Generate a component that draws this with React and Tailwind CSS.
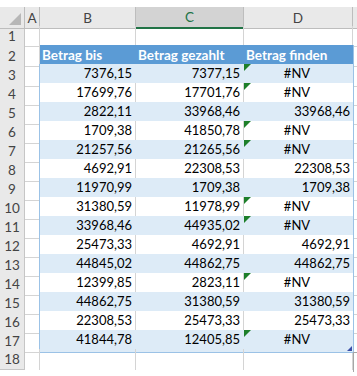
import React from "react";

const rows = [
  ["7376,15", "7377,15", null],
  ["17699,76", "17701,76", null],
  ["2822,11", "33968,46", "33968,46"],
  ["1709,38", "41850,78", null],
  ["21257,56", "21265,56", null],
  ["4692,91", "22308,53", "22308,53"],
  ["11970,99", "1709,38", "1709,38"],
  ["31380,59", "11978,99", null],
  ["33968,46", "44935,02", null],
  ["25473,33", "4692,91", "4692,91"],
  ["44845,02", "44862,75", "44862,75"],
  ["12399,85", "2823,11", null],
  ["44862,75", "31380,59", "31380,59"],
  ["22308,53", "25473,33", "25473,33"],
  ["41844,78", "12405,85", null],
];

const cols = "grid grid-cols-[25px_15px_96px_108px_109px_1fr]";

function RowHead({ n }) {
  return (
    <div className="flex items-center justify-center bg-[#e9e9e9] border-r border-b border-[#c6c6c6] text-[#444] text-[13.5px]">
      {n}
    </div>
  );
}

function ErrorMark() {
  return (
    <svg className="absolute left-0 top-0" width="7" height="7" viewBox="0 0 7 7">
      <path d="M0 0H7L0 7Z" fill="#1d7f2a" />
    </svg>
  );
}

export default function App() {
  return (
    <div
      className="relative w-[357px] h-[376px] bg-white overflow-hidden"
      style={{ fontFamily: "Lato, 'Liberation Sans', sans-serif" }}
    >
      <div className="h-[7px]" />
      {/* column headers */}
      <div className={`${cols} h-[19px] text-[13.5px] text-[#444]`}>
        <div className="relative bg-[#e9e9e9] border-r border-b border-[#bdbdbd]">
          <svg className="absolute right-[3px] bottom-[3px]" width="12" height="12" viewBox="0 0 12 12">
            <path d="M12 0V12H0Z" fill="#b7b7b7" />
          </svg>
        </div>
        <div className="flex items-center justify-center bg-[#e9e9e9] border-r border-b border-[#bdbdbd]">A</div>
        <div className="flex items-center justify-center bg-[#e9e9e9] border-r border-b border-[#bdbdbd]">B</div>
        <div className="flex items-center justify-center bg-[#d3d3d3] border-r border-[#bdbdbd] border-b-2 border-b-[#217346] text-[#217346]">C</div>
        <div className="flex items-center justify-center bg-[#e9e9e9] border-r border-b border-[#bdbdbd]">D</div>
        <div className="bg-[#e9e9e9] border-b border-[#bdbdbd]" />
      </div>

      {/* row 1 */}
      <div className={`${cols} h-[19px]`}>
        <RowHead n={1} />
        <div className="border-r border-b border-[#d4d4d4]" />
        <div className="border-r border-b border-[#d4d4d4]" />
        <div className="border-r border-b border-[#d4d4d4]" />
        <div className="border-r border-b border-[#d4d4d4]" />
        <div className="border-b border-[#d4d4d4]" />
      </div>

      {/* row 2 – table header */}
      <div className={`${cols} h-[19px] text-[13.5px]`}>
        <RowHead n={2} />
        <div className="border-r border-b border-[#d4d4d4]" />
        <div className="flex items-end pb-[1px] pl-[2px] bg-[#5b9bd5] text-white font-bold border-b border-[#9bc2e6]">Betrag bis</div>
        <div className="flex items-end pb-[1px] pl-[2px] bg-[#5b9bd5] text-white font-bold border-b border-[#9bc2e6]">Betrag gezahlt</div>
        <div className="flex items-end pb-[1px] pl-[2px] bg-[#5b9bd5] text-white font-bold border-b border-[#9bc2e6]">Betrag finden</div>
        <div className="border-l border-b border-[#d4d4d4] border-l-[#9bc2e6]" />
      </div>

      {rows.map((r, i) => {
        const banded = i % 2 === 0;
        const cell = banded
          ? "bg-[#ddebf7] border-r border-r-[#ddebf7]"
          : "bg-white border-r border-r-[#d4d4d4]";
        return (
          <div key={i} className={`${cols} h-[19px] text-[13px] text-black`}>
            <RowHead n={i + 3} />
            <div className="border-r border-b border-[#d4d4d4] border-r-[#9bc2e6]" />
            <div className={`flex items-end justify-end pb-[2px] pr-[3px] border-b border-b-[#9bc2e6] ${cell}`}>{r[0]}</div>
            <div className={`flex items-end justify-end pb-[2px] pr-[3px] border-b border-b-[#9bc2e6] ${cell}`}>{r[1]}</div>
            <div
              className={`relative flex items-end pb-[2px] pr-[3px] border-b border-b-[#9bc2e6] ${
                banded ? "bg-[#ddebf7]" : "bg-white"
              } ${r[2] ? "justify-end" : "justify-center pr-0"}`}
            >
              {r[2] ? r[2] : (
                <>
                  <ErrorMark />
                  #NV
                </>
              )}
              {i === rows.length - 1 && (
                <svg className="absolute right-[1px] bottom-[1px]" width="5" height="5" viewBox="0 0 5 5">
                  <path d="M5 0V5H0Z" fill="#3b4fa8" />
                </svg>
              )}
            </div>
            <div className="border-l border-b border-[#d4d4d4] border-l-[#9bc2e6]" />
          </div>
        );
      })}

      {/* row 18 */}
      <div className={`${cols} h-[16px]`}>
        <RowHead n={18} />
        <div className="border-r border-[#d4d4d4]" />
        <div className="border-r border-[#d4d4d4]" />
        <div className="border-r border-[#d4d4d4]" />
        <div className="border-r border-[#d4d4d4]" />
        <div className="relative">
          <div className="absolute left-[0px] top-[3px] w-[10px] h-[20px] border-l border-t border-[#a6a6a6]" />
        </div>
      </div>
    </div>
  );
}
